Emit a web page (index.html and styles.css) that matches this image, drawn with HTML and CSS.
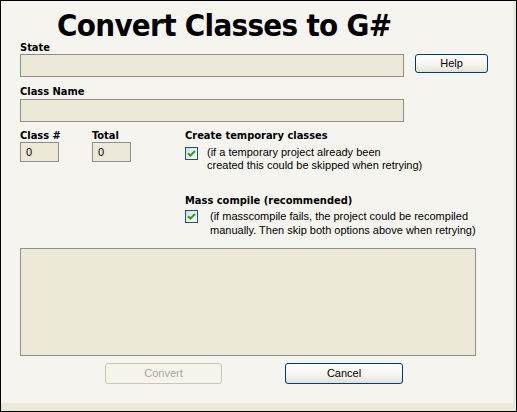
FILE: index.html
```html
<!DOCTYPE html>
<html>
<head>
<meta charset="utf-8">
<link rel="stylesheet" href="styles.css">
</head>
<body>
<div class="window">
  <div class="panel">
    <h1 class="title">Convert Classes to G#</h1>
    <div class="label">State</div>
    <div class="row-state">
      <div class="field field-wide"></div>
      <button class="btn btn-help">Help</button>
    </div>
    <div class="label label-gap">Class Name</div>
    <div class="field field-wide field-name"></div>
    <div class="middle">
      <div class="counters">
        <div class="counter">
          <div class="label">Class #</div>
          <div class="field field-small">0</div>
        </div>
        <div class="counter">
          <div class="label">Total</div>
          <div class="field field-small">0</div>
        </div>
      </div>
      <div class="options">
        <div class="label">Create temporary classes</div>
        <div class="option">
          <span class="check"><svg width="9" height="9" viewBox="0 0 9 9"><path d="M1 4.2 L3.4 6.6 L8 2" fill="none" stroke="#21a121" stroke-width="2"/></svg></span>
          <div class="option-text">(if a temporary project already been<br>created this could be skipped when retrying)</div>
        </div>
        <div class="label label-mass">Mass compile (recommended)</div>
        <div class="option option-mass">
          <span class="check"><svg width="9" height="9" viewBox="0 0 9 9"><path d="M1 4.2 L3.4 6.6 L8 2" fill="none" stroke="#21a121" stroke-width="2"/></svg></span>
          <div class="option-text option-text-mass">(if masscompile fails, the project could be recompiled<br>manually. Then skip both options above when retrying)</div>
        </div>
      </div>
    </div>
    <div class="log"></div>
    <div class="actions">
      <button class="btn btn-convert" disabled>Convert</button>
      <button class="btn btn-cancel">Cancel</button>
    </div>
  </div>
</div>
</body>
</html>
```
FILE: styles.css
```css
* { box-sizing: border-box; }
html, body { margin: 0; padding: 0; background: #ece9d8; }
.window {
  width: 517px;
  height: 412px;
  border: 1px solid #000;
  background: #ece9d8;
  overflow: hidden;
}
.panel {
  width: 512px;
  height: 402px;
  background: #f5f4ef;
  padding-left: 19px;
  padding-top: 9px;
  font-family: "Liberation Sans", Arial, sans-serif;
  font-size: 11px;
  color: #000;
}
.title {
  margin: 0 0 0 37px;
  font-family: "DejaVu Sans Condensed", "DejaVu Sans", sans-serif;
  font-weight: bold;
  font-size: 31px;
  letter-spacing: -0.7px;
  line-height: 31px;
  height: 31px;
  white-space: nowrap;
}
.label {
  font-family: "DejaVu Sans Condensed", "DejaVu Sans", sans-serif;
  font-weight: bold;
  font-size: 11px;
  line-height: 13px;
  height: 13px;
  white-space: nowrap;
}
.label-gap { margin-top: 8px; }
.row-state { display: flex; align-items: flex-start; }
.field {
  background: #ece9d8;
  border: 1px solid #8d8d8a;
}
.field-wide { width: 384px; height: 23px; }
.field-name { margin-top: 1px; }
.btn {
  font-family: "Liberation Sans", Arial, sans-serif;
  font-size: 11px;
  color: #000;
  border: 1px solid #003c74;
  border-radius: 3px;
  background: linear-gradient(#ffffff, #f4f3ee 60%, #e2e0d6);
  padding: 0;
  height: 21px;
  line-height: 19px;
  text-align: center;
}
.btn-help { width: 73px; height: 19px; line-height: 17px; margin-left: 11px; }
.middle { display: flex; margin-top: 7px; }
.counters { display: flex; width: 165px; }
.counter { width: 72px; }
.counter + .counter { width: 60px; }
.field-small {
  width: 39px;
  height: 20px;
  padding-left: 5px;
  line-height: 18px;
  font-size: 11px;
}
.options { display: flex; flex-direction: column; }
.option { display: flex; align-items: flex-start; margin-top: 4px; }
.check {
  width: 13px;
  height: 13px;
  margin-top: 1px;
  border: 1px solid #1c5180;
  background: linear-gradient(135deg, #dcdcd7, #ffffff);
  display: flex;
  align-items: center;
  justify-content: center;
}
.option-text {
  margin-left: 9px;
  line-height: 13px;
  white-space: nowrap;
}
.label-mass { margin-top: 22px; }
.option-mass { margin-top: 2px; }
.option-text-mass { margin-left: 12px; line-height: 14px; margin-top: 0; }
.log {
  margin-top: 11px;
  width: 456px;
  height: 108px;
  background: #ece9d8;
  border: 1px solid #8d8d8a;
}
.actions { display: flex; margin-top: 7px; padding-left: 85px; }
.btn-convert {
  width: 117px;
  border-color: #c9c7ba;
  color: #aca899;
  background: #f5f4ea;
}
.btn-cancel { width: 118px; margin-left: 63px; }
```
